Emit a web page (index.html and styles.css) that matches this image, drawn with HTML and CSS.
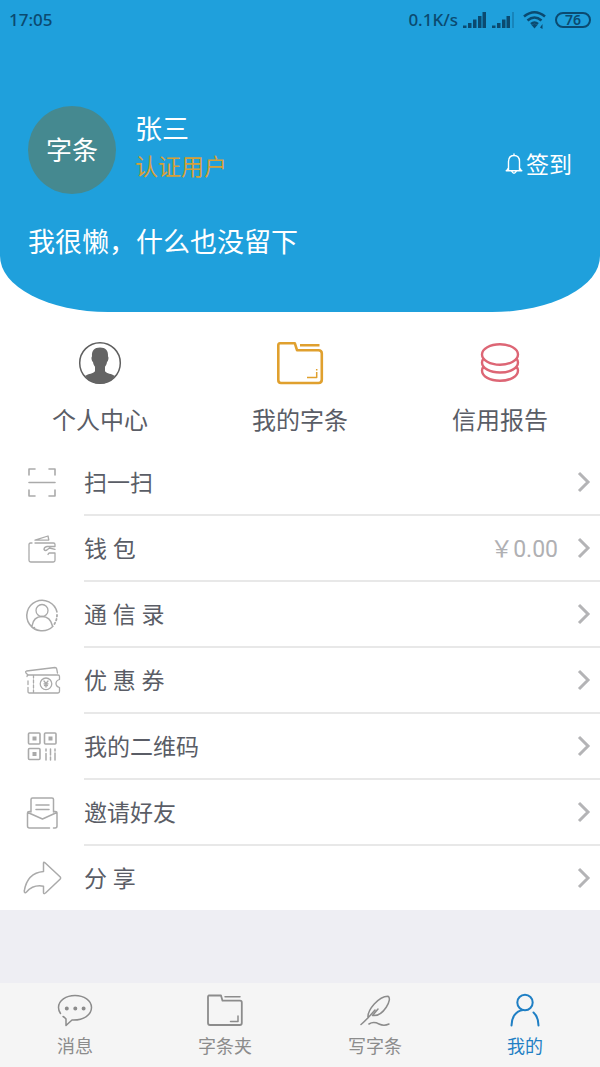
FILE: index.html
```html
<!DOCTYPE html>
<html lang="zh-CN">
<head>
<meta charset="utf-8">
<meta name="viewport" content="width=device-width, initial-scale=1">
<title>我的</title>
<link rel="stylesheet" href="styles.css">
</head>
<body>
<div class="page-top">
<header class="hero">
  <div class="status">
    <span class="status-time">17:05</span>
    <span class="status-right">
      <span>0.1K/s</span>
      <svg class="signal" width="24" height="18" viewBox="0 0 24 18" fill="currentColor"><path d="M0 14.500h3.500V17H0zM5 12h3.500v5H5zM10 8.500h3.500V17H10zM15 5h3.500v12H15zM19.500 1H23v16h-3.500z"/></svg>
      <svg class="signal" width="24" height="18" viewBox="0 0 24 18" fill="currentColor"><path d="M0 14.500h3.500V17H0zM5 12h3.500v5H5zM10 8.500h3.500V17H10zM14.500 5H18v12h-3.500z"/><path opacity=".3" d="M20 1h2v16h-2z"/></svg>
      <svg class="wifi" width="26" height="20" viewBox="0 0 26 20" fill="none" stroke="currentColor" stroke-width="2.6"><path d="M2 6.500Q12.500-2 23 6.500M5.500 10.500q7-6 14 0M9 14q3.500-3 7 0"/><path fill="currentColor" stroke="none" d="M9.500 15q3-2 6 0l-3 3.500zM20.500 14v5l-2.500-1.500z"/></svg>
      <span class="battery">76</span>
    </span>
  </div>
  <div class="profile">
    <div class="avatar">字条</div>
    <div class="identity">
      <h1 class="name">张三</h1>
      <p class="badge">认证用户</p>
    </div>
    <button class="checkin" type="button">
      <svg width="18" height="22" viewBox="0 0 18 22" fill="none" stroke="currentColor" stroke-width="1.400" stroke-linejoin="round" stroke-linecap="round"><path d="M3.500 17.500V8.500C3.500 4.800 5.800 2.500 9 2.500s5.500 2.300 5.500 6v9M1.200 17.800h15.600M9 2.500V1M6.800 18.500q2.200 3.500 4.400 0M3.500 15l-2 2.800M14.500 15l2 2.800"/></svg>
      <span>签到</span>
    </button>
  </div>
  <p class="motto">我很懒，什么也没留下</p>
</header>
</div>

<main class="content">
  <nav class="shortcuts">
    <a class="shortcut" href="#center">
      <svg width="50" height="46" viewBox="0 0 50 46"><circle cx="25" cy="23" r="20.300" fill="none" stroke="#5f5f5f" stroke-width="1.500"/><path fill="#646464" d="M25 7.500c5.500 0 8.500 3 8 9 .9.500.6 4.200-1 5.500-.3 2-1 3.600-2 4.800v4.400c1.800 2.300 6.500 2.500 9.800 4.600C36.500 40.500 31 43.800 25 43.800S13.500 40.500 10.200 35.800c3.300-2.100 8-2.300 9.800-4.600v-4.400c-1-1.200-1.700-2.800-2-4.800-1.600-1.300-1.900-5-1-5.500-.5-6 2.500-9 8-9z"/></svg>
      <span>个人中心</span>
    </a>
    <a class="shortcut" href="#notes">
      <svg width="50" height="46" viewBox="0 0 50 46" fill="none" stroke="#e0a02e" stroke-width="2.600" stroke-linejoin="round"><path d="M5 3.200h14.800l2.200 7h21.500q3.300 0 3.300 3.300v26q0 3.500-3.300 3.500H6q-2.700 0-2.700-3V5.500Q3.300 3.200 5 3.200zM25 5.200h19.500"/><path stroke-width="1.500" d="M32 37.500h9.700v-5.500M41.700 30.500v-1.500"/></svg>
      <span>我的字条</span>
    </a>
    <a class="shortcut" href="#credit">
      <svg width="50" height="46" viewBox="0 0 50 46" fill="none" stroke="#dd6675" stroke-width="2.400"><ellipse cx="25" cy="14.500" rx="18" ry="10.200"/><path d="M8.500 18.500q-1.500 2-1.500 4c0 5.800 8 10 18 10s18-4.200 18-10q0-2-1.500-4M8.500 26.500q-1.500 2-1.500 4c0 6 8 10.200 18 10.200s18-4.200 18-10.200q0-2-1.500-4"/></svg>
      <span>信用报告</span>
    </a>
  </nav>

  <ul class="menu">
    <li><a class="row" href="#scan">
      <svg class="row-icon" viewBox="0 0 40 40"><path stroke-width="1.600" d="M7 12V6h6M27 6h6v6M7 27v6h6M27 33h6v-6M7 19.500h26"/></svg>
      <span class="row-body"><span class="row-label">扫一扫</span><svg class="chevron" viewBox="0 0 14 22"><path d="M2 2l9 9-9 9"/></svg></span></a></li>
    <li><a class="row" href="#wallet">
      <svg class="row-icon" viewBox="0 0 40 40"><path d="M10 14H8.500Q7 14 7 15.500v15.800Q7 33 8.700 33h22.600q1.700 0 1.700-1.700V24h-5.500q-1 0-1.500 1.500M13 14h18.500q1.500 0 1.500 1.500v2H25q-3 .5-3 3 1.500 2 3.500 0l2-1.500 5.500 1.300M13 11.200l13-4.200.8 4z"/></svg>
      <span class="row-body"><span class="row-label">钱 包</span><span class="amount">￥0.00</span><svg class="chevron" viewBox="0 0 14 22"><path d="M2 2l9 9-9 9"/></svg></span></a></li>
    <li><a class="row" href="#contacts">
      <svg class="row-icon" viewBox="0 0 40 40"><path stroke-width="1.500" d="M35 17A15.300 15.300 0 1 0 31 31.300M10 31c1-6.500 5-9.500 10-9.500S29 24.500 30.500 31M12.500 32.500h0"/><circle cx="20" cy="15.500" r="6"/><path stroke-dasharray="1.500 2.500" stroke-width="1.800" d="M35 20q0 6-4 11"/></svg>
      <span class="row-body"><span class="row-label">通 信 录</span><svg class="chevron" viewBox="0 0 14 22"><path d="M2 2l9 9-9 9"/></svg></span></a></li>
    <li><a class="row" href="#coupons">
      <svg class="row-icon" viewBox="0 0 40 40"><path d="M6 14l-2-2q-1-1.500.5-2L33 6.500q1.500 0 1.700 1.500l.8 4M5 15.500q0-1.500 1.500-1.500H36q1.500 0 1.500 1.500v3q-3.500 1-3.500 4t3.500 4v3.700q0 1.800-1.500 1.800H7.500Q6 32 6 30.500v-4M6 23.500V20M11.500 15v2m0 2v3m0 2v3m0 2v2"/><circle cx="24" cy="22.800" r="5.800"/><path d="M22 20l2 2.500 2-2.500M24 22.500V26M22 22.800h4M22.500 24.500h3"/></svg>
      <span class="row-body"><span class="row-label">优 惠 券</span><svg class="chevron" viewBox="0 0 14 22"><path d="M2 2l9 9-9 9"/></svg></span></a></li>
    <li><a class="row" href="#qrcode">
      <svg class="row-icon" viewBox="0 0 40 40"><g stroke-width="1.600"><rect x="6.500" y="6" width="11.500" height="11" rx="1"/><rect x="22.500" y="6" width="11.500" height="11" rx="1"/><rect x="6.500" y="21.500" width="11.500" height="11" rx="1"/></g><path fill="#aaa" stroke="none" d="M10.500 9.500h4v4h-4zM26.500 9.500h4v4h-4zM10.500 25h4v4h-4z"/><path stroke-width="1.500" d="M24 22v2m0 2.500V33M28.500 22v6m0 2v3M33 22v2m0 2v7"/></svg>
      <span class="row-body"><span class="row-label">我的二维码</span><svg class="chevron" viewBox="0 0 14 22"><path d="M2 2l9 9-9 9"/></svg></span></a></li>
    <li><a class="row" href="#invite">
      <svg class="row-icon" viewBox="0 0 40 40"><path stroke-width="1.500" d="M9 19V6.500Q9 5 10.500 5H30q1.500 0 1.500 1.500V19M14 12h13M14 16.500h13M9 18.500H7.300Q5.500 18.500 5.500 20v13q0 2 2 2h20M31.500 35H33q2 0 2-2V20q0-1.500-2-1.500h-1.500M5.800 19.500L20.500 26 34.800 19.500"/></svg>
      <span class="row-body"><span class="row-label">邀请好友</span><svg class="chevron" viewBox="0 0 14 22"><path d="M2 2l9 9-9 9"/></svg></span></a></li>
    <li><a class="row" href="#share">
      <svg class="row-icon" viewBox="0 0 40 40"><path stroke-width="1.500" d="M21.500 13.500V5.300q0-1.800 1.500-.5l15 14q1.200 1.200 0 2.400L23.500 35q-2 1.500-2-.5v-6.300C12.500 26.500 8 30 4.500 34c-1.200 1.200-2.500.5-2.200-1C4 22 10.500 14.500 21.500 13.500z"/></svg>
      <span class="row-body"><span class="row-label">分 享</span><svg class="chevron" viewBox="0 0 14 22"><path d="M2 2l9 9-9 9"/></svg></span></a></li>
  </ul>
</main>

<nav class="tabs">
  <a class="tab" href="#messages">
    <svg viewBox="0 0 40 36"><path d="M5.500 20.500C4 18.500 3.500 17 3.500 14.500 3.500 7.500 11 2.500 20 2.500s16.500 5 16.500 12-7.500 13-19.500 12.500l-6 5.500v-6.500q-1-1.500-3-2.500"/><path fill="currentColor" stroke="none" d="M9.800 15.500a2 2 0 1 1 4 0 2 2 0 0 1-4 0zM18.300 15.500a2 2 0 1 1 4 0 2 2 0 0 1-4 0zM26.600 15.500a2 2 0 1 1 4 0 2 2 0 0 1-4 0z"/></svg>
    <span>消息</span>
  </a>
  <a class="tab" href="#folder">
    <svg viewBox="0 0 40 36"><path stroke-width="1.800" d="M4 2.500h12l1.500 5.200H35q1.800 0 1.800 1.800V30q0 2-2 2H5q-2 0-2-2V4Q3 2.500 4 2.500z"/><path d="M20 3.800h15M25.500 28.500H33V23"/></svg>
    <span>字条夹</span>
  </a>
  <a class="tab" href="#write">
    <svg viewBox="0 0 40 36"><path d="M6 31.500C11 27.500 15.500 22 20 17M13 25C12 17 24 3 33 3.200 38 5.500 28.500 24 17.500 22.500L23 16M14 31c4-2.500 7-1.500 10 0s7 1.500 10 0"/></svg>
    <span>写字条</span>
  </a>
  <a class="tab tab-active" href="#me" aria-current="page">
    <svg viewBox="0 0 40 36"><g stroke-width="2"><circle cx="20" cy="9.500" r="7.700"/><path d="M6.500 32.500c0-8 4-14.500 11.500-15.500M28.500 19.500q5 4.500 5 13"/></g></svg>
    <span>我的</span>
  </a>
</nav>
</body>
</html>
```
FILE: styles.css
```css
* {
  box-sizing: border-box;
}

body {
  margin: 0;
  min-height: 100vh;
  display: flex;
  flex-direction: column;
  background: #eeeef3;
  color: #5a5d66;
  font-family: Roboto, "Noto Sans CJK SC", sans-serif;
}

a {
  color: inherit;
  text-decoration: none;
}

h1,
p,
ul {
  margin: 0;
  padding: 0;
  font-weight: 400;
}

.page-top,
.content {
  background: #fff;
}

.hero {
  background: #1fa0dc;
  color: #fff;
  padding-bottom: 49px;
  border-radius: 0 0 108px 108px / 0 0 56px 56px;
}

.status {
  display: flex;
  justify-content: space-between;
  align-items: center;
  height: 40px;
  padding: 0 9px;
  color: #0b4a70;
  font: 500 17px/24px "Noto Sans", sans-serif;
}

.status-right {
  display: flex;
  align-items: center;
  gap: 5px;
}

.wifi {
  margin: 0 2px 0 1px;
}

.battery {
  width: 36px;
  height: 16px;
  border: 2px solid currentColor;
  border-radius: 8px;
  font-size: 14px;
  font-weight: 600;
  line-height: 12px;
  text-align: center;
}

.profile {
  display: flex;
  align-items: center;
  padding: 66px 28px 0;
}

.avatar {
  width: 88px;
  height: 88px;
  border-radius: 50%;
  background: #458990;
  font-size: 26px;
  line-height: 90px;
  text-align: center;
}

.identity {
  flex: 1;
  padding: 0 0 4px 19px;
}

.name {
  font-size: 27px;
  line-height: 40px;
}

.badge {
  color: #d5a038;
  font-size: 23px;
  line-height: 36px;
}

.checkin {
  display: flex;
  align-items: center;
  gap: 3px;
  margin-top: 28px;
  padding: 0;
  border: 0;
  background: none;
  color: #fff;
  font-family: inherit;
  font-size: 23px;
  line-height: 38px;
}

.checkin span {
  padding-top: 3px;
}

.motto {
  padding: 29px 28px 0;
  font-size: 27px;
  line-height: 40px;
}

.shortcuts {
  display: grid;
  grid-template-columns: repeat(3, 1fr);
  padding: 28px 0 11px;
}

.shortcut {
  display: flex;
  flex-direction: column;
  align-items: center;
  gap: 17px;
  font-size: 24px;
  line-height: 36px;
}

.menu {
  list-style: none;
}

.row {
  display: flex;
  align-items: center;
  gap: 22px;
  padding-left: 22px;
}

.row-icon {
  width: 40px;
  height: 40px;
  fill: none;
  stroke: #aaa;
  stroke-width: 1.3;
  stroke-linecap: round;
  stroke-linejoin: round;
}

.row-body {
  flex: 1;
  display: flex;
  align-items: center;
  height: 66px;
  padding-right: 9px;
  border-bottom: 2px solid #e8e8e8;
  font-size: 23px;
  line-height: 34px;
}

.menu li:last-child .row-body {
  height: 64px;
  border-bottom: 0;
}

.row-label {
  flex: 1;
}

.row-label,
.amount {
  padding-top: 3px;
}

.amount {
  margin-right: 19px;
  color: #b0b0b3;
}

.chevron {
  width: 14px;
  height: 22px;
  fill: none;
  stroke: #b4b4b6;
  stroke-width: 3;
}

.tabs {
  display: grid;
  grid-template-columns: repeat(4, 1fr);
  margin-top: auto;
  padding: 10px 0 6px;
  background: #f5f5f5;
  color: #8c8c8c;
}

.tab {
  display: flex;
  flex-direction: column;
  align-items: center;
  gap: 4px;
  font-size: 18px;
  line-height: 28px;
}

.tab svg {
  width: 40px;
  height: 36px;
  fill: none;
  stroke: currentColor;
  stroke-width: 1.5;
  stroke-linecap: round;
  stroke-linejoin: round;
}

.tab-active {
  color: #1f7fc4;
}
```
